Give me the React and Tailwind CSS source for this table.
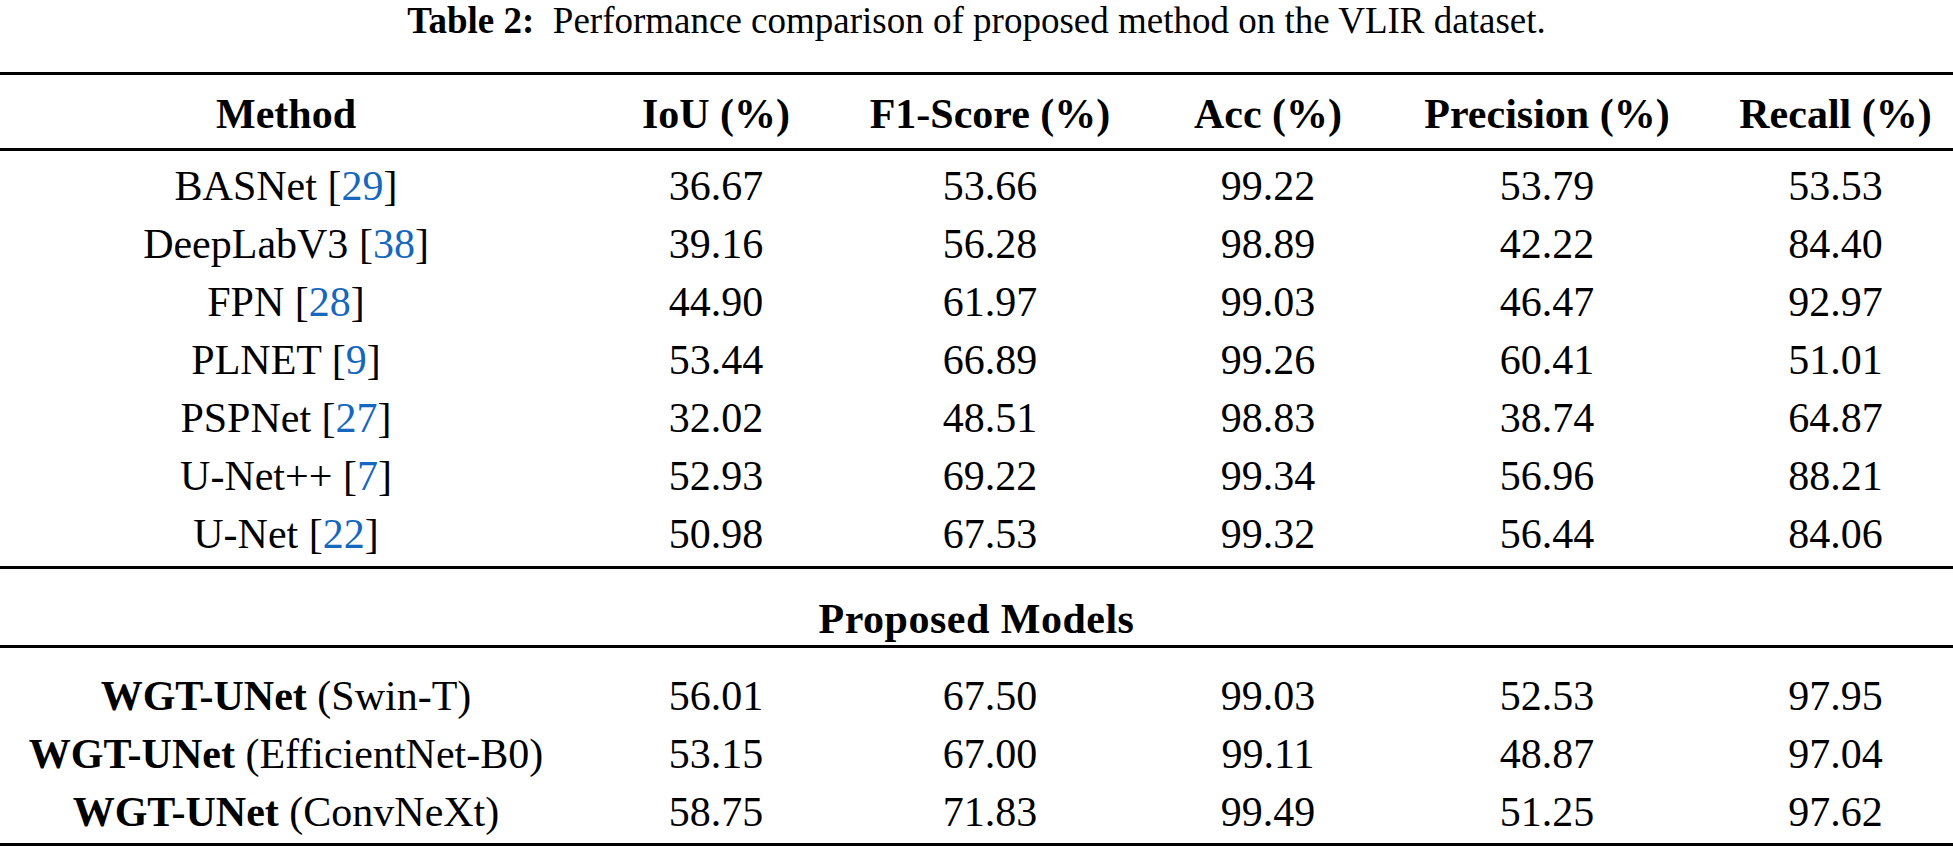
import React from "react";

const rows = [
  ["BASNet", "29", "36.67", "53.66", "99.22", "53.79", "53.53"],
  ["DeepLabV3", "38", "39.16", "56.28", "98.89", "42.22", "84.40"],
  ["FPN", "28", "44.90", "61.97", "99.03", "46.47", "92.97"],
  ["PLNET", "9", "53.44", "66.89", "99.26", "60.41", "51.01"],
  ["PSPNet", "27", "32.02", "48.51", "98.83", "38.74", "64.87"],
  ["U-Net++", "7", "52.93", "69.22", "99.34", "56.96", "88.21"],
  ["U-Net", "22", "50.98", "67.53", "99.32", "56.44", "84.06"],
];

const proposed = [
  ["Swin-T", "56.01", "67.50", "99.03", "52.53", "97.95"],
  ["EfficientNet-B0", "53.15", "67.00", "99.11", "48.87", "97.04"],
  ["ConvNeXt", "58.75", "71.83", "99.49", "51.25", "97.62"],
];

const gridCls =
  "grid grid-cols-[572px_288px_260px_296px_262px_275px] text-center";

function Rule() {
  return <div className="h-[3px] bg-black" />;
}

export default function App() {
  return (
    <div
      className="w-[1953px] h-[849px] bg-white text-black overflow-hidden"
      style={{ fontFamily: '"Liberation Serif", "Times New Roman", serif' }}
    >
      <div className="h-[72px]">
        <div className="h-[42px] leading-[42px] text-[37px] text-center whitespace-pre">
          <span className="font-bold">Table 2:</span>
          {"  "}Performance comparison of proposed method on the VLIR dataset.
        </div>
      </div>
      <Rule />
      <div className={`${gridCls} font-bold text-[42px] leading-[58px] pt-[10px] pb-[5px]`}>
        <div>Method</div>
        <div>IoU (%)</div>
        <div>F1-Score (%)</div>
        <div>Acc (%)</div>
        <div>Precision (%)</div>
        <div className="pl-[40px]">Recall (%)</div>
      </div>
      <Rule />
      <div className="pt-[6px] pb-[3px] text-[42px] leading-[58px]">
        {rows.map((r) => (
          <div key={r[0]} className={gridCls}>
            <div>
              {r[0]} [<span className="text-[#1667bd]">{r[1]}</span>]
            </div>
            <div>{r[2]}</div>
            <div>{r[3]}</div>
            <div>{r[4]}</div>
            <div>{r[5]}</div>
            <div className="pl-[40px]">{r[6]}</div>
          </div>
        ))}
      </div>
      <Rule />
      <div className="pt-[24px] text-[42px] leading-[52px] font-bold text-center tracking-[0.5px]">
        Proposed Models
      </div>
      <Rule />
      <div className="pt-[19px] pb-[2px] text-[42px] leading-[58px]">
        {proposed.map((r) => (
          <div key={r[0]} className={gridCls}>
            <div className="whitespace-nowrap">
              <span className="font-bold">WGT-UNet</span> ({r[0]})
            </div>
            <div>{r[1]}</div>
            <div>{r[2]}</div>
            <div>{r[3]}</div>
            <div>{r[4]}</div>
            <div className="pl-[40px]">{r[5]}</div>
          </div>
        ))}
      </div>
      <Rule />
    </div>
  );
}
